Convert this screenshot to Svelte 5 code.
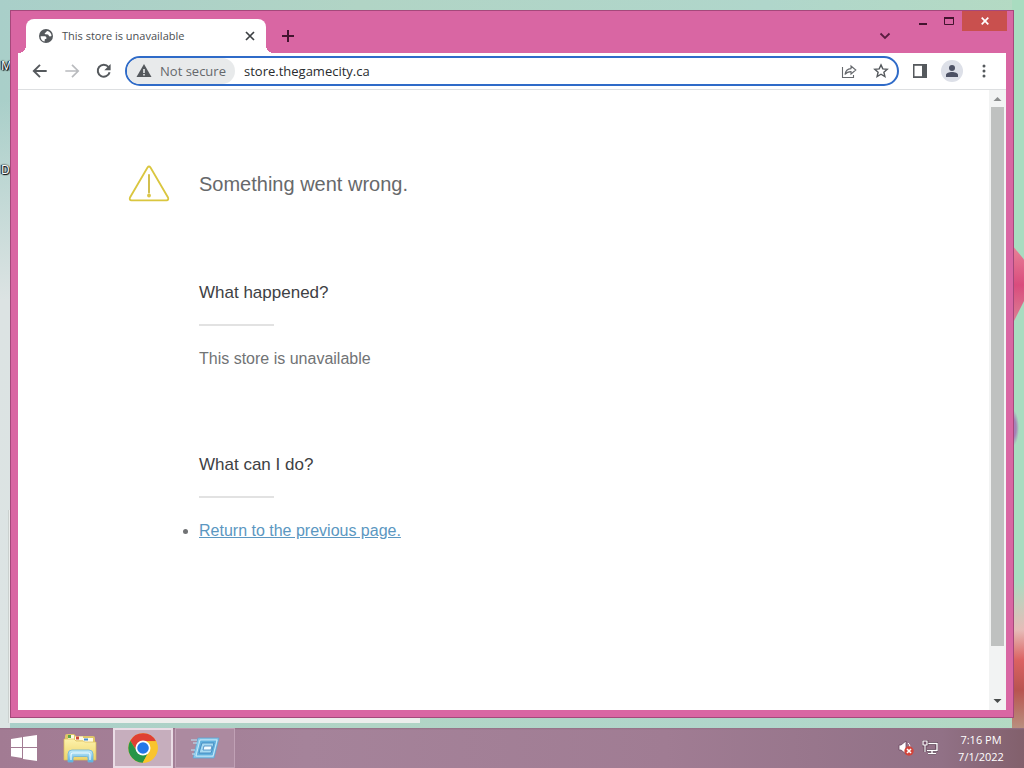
<script>
  let address = $state('store.thegamecity.ca');
  const sections = [
    { title: 'What happened?', text: 'This store is unavailable' },
    { title: 'What can I do?', link: 'Return to the previous page.' }
  ];
</script>

<div class="screen">
  <div class="desktop">
    <div class="petals" aria-hidden="true"></div>
    <div class="back-window" aria-hidden="true"></div>
    <span class="shortcut first">M</span>
    <span class="shortcut second">D</span>

    <div class="window">
      <header class="titlebar">
        <div class="tabs">
          <div class="tab">
            <svg class="globe" viewBox="0 0 16 16" width="16" height="16" aria-hidden="true">
              <circle cx="8" cy="8" r="7" fill="#55595d" />
              <path d="M2.6 8.2 6.9 8.3c1.3.2 1.7 1.3 1.5 2.4l-1.6.5-.2 2.3C4 13 2.4 10.800 2.600 8.200Z" fill="#fff" />
              <path d="M9.700 2.900c-1.700.1-1.300 1.700-2.700 2-.6.2-.2 1.300.7 1.400l2.300.2c.7.8 1 1.700 2 1.900l1.500-.3c.1-2.500-1.500-4.600-3.800-5.200Z" fill="#fff" />
            </svg>
            <span class="tab-title">This store is unavailable</span>
            <button class="tab-close" aria-label="Close tab">
              <svg viewBox="0 0 10 10" width="10" height="10"><path d="m1 1 8 8M9 1 1 9" fill="none" stroke="#3c4043" stroke-width="1.700" /></svg>
            </button>
          </div>
          <button class="new-tab" aria-label="New tab">
            <svg viewBox="0 0 12 12" width="12" height="12"><path d="M6 0v12M0 6h12" stroke="#43142f" stroke-width="2" /></svg>
          </button>
        </div>
        <button class="tab-search" aria-label="Search tabs">
          <svg viewBox="0 0 12 8" width="12" height="8"><path d="m1.500 1.500 4.500 4.500 4.500-4.500" fill="none" stroke="#5b1c40" stroke-width="1.800" /></svg>
        </button>
        <div class="controls">
          <button aria-label="Minimize"><svg viewBox="0 0 10 12" width="10" height="12"><path d="M1 8h8v2H1z" fill="#43142f" /></svg></button>
          <button aria-label="Maximize"><svg viewBox="0 0 10 8" width="10" height="8"><path d="M.5 1v6.500h9V1" fill="none" stroke="#43142f" /><path d="M0 0h10v2H0z" fill="#43142f" /></svg></button>
          <button class="close" aria-label="Close"><svg viewBox="0 0 8 8" width="8" height="8"><path d="m.7.7 6.600 6.600M7.300.7.7 7.300" stroke="#fff" stroke-width="1.700" /></svg></button>
        </div>
      </header>

      <nav class="toolbar" aria-label="Browser">
        <button aria-label="Back"><svg viewBox="0 0 16 16" width="16" height="16"><path d="M14.700 8H2M8 1.800 1.800 8 8 14.200" fill="none" stroke="#55595d" stroke-width="1.900" /></svg></button>
        <button aria-label="Forward"><svg viewBox="0 0 16 16" width="16" height="16"><path d="M1.300 8H14M8 1.800 14.200 8 8 14.200" fill="none" stroke="#b9bbbe" stroke-width="1.700" /></svg></button>
        <button aria-label="Reload"><svg viewBox="0 0 16 16" width="16" height="16"><path d="M13.600 9.200A6 6 0 1 1 12.500 4" fill="none" stroke="#55595d" stroke-width="2" /><path d="M14.600 1v6.300H8.300z" fill="#55595d" /></svg></button>
        <div class="omnibox">
          <button class="security">
            <svg viewBox="0 0 16 14" width="16" height="14" aria-hidden="true"><path d="M8 0 15.500 13H.5z" fill="#55595d" /><path d="M7.200 5h1.600v4H7.200zm0 5h1.600v1.600H7.200z" fill="#e8eaeb" /></svg>
            Not secure
          </button>
          <input aria-label="Address" bind:value={address} spellcheck="false" />
          <button aria-label="Share"><svg viewBox="0 0 16 16" width="16" height="16"><path d="M1.500 4v10.500h11V12M4 11.500c.5-4 2.500-5.700 6-5.900V3l4.800 4-4.800 4V8.600c-2.700 0-4.500.8-6 2.900Z" fill="none" stroke="#66696d" stroke-width="1.100" /></svg></button>
          <button aria-label="Bookmark this tab"><svg viewBox="0 0 16 16" width="16" height="16"><path d="m8 1.900 1.800 4 4.400.4-3.300 2.900 1 4.300L8 11.200l-3.900 2.300 1-4.300-3.300-2.900 4.400-.4z" fill="none" stroke="#55595d" stroke-width="1.400" /></svg></button>
        </div>
        <div class="actions">
          <button aria-label="Side panel"><svg viewBox="0 0 14 14" width="14" height="14"><path d="M0 0h14v14H0z" fill="#55595d" /><path d="M1.500 1.800H9v10.400H1.500z" fill="#fff" /></svg></button>
          <button aria-label="Profile"><svg viewBox="0 0 22 22" width="22" height="22"><circle cx="11" cy="11" r="11" fill="#dde0e8" /><circle cx="11" cy="8" r="3" fill="#4d5265" /><path d="M5 17v-2c0-2 3-3 6-3s6 1 6 3v2z" fill="#4d5265" /></svg></button>
          <button aria-label="Menu"><svg viewBox="0 0 4 14" width="4" height="14"><g fill="#55595d"><circle cx="2" cy="2" r="1.500" /><circle cx="2" cy="7" r="1.500" /><circle cx="2" cy="12" r="1.500" /></g></svg></button>
        </div>
      </nav>

      <div class="viewport">
        <main>
          <svg class="warning" viewBox="0 0 42 38" width="42" height="38" aria-hidden="true">
            <path d="M19.500 2.500q1.500-2 3 0L40 32.500q1 2.500-1.500 2.800h-35Q1 35 2 32.500Z" fill="none" stroke="#dac63f" stroke-width="1.800" />
            <path d="M21 10v17.500" stroke="#cdb83c" stroke-width="1.800" stroke-linecap="round" />
            <circle cx="21" cy="30.500" r="1.900" fill="#dcc648" />
          </svg>
          <div class="message">
            <h1>Something went wrong.</h1>
            {#each sections as section}
              <section>
                <h2>{section.title}</h2>
                {#if section.text}<p>{section.text}</p>{/if}
                {#if section.link}
                  <ul><li><a href="#previous">{section.link}</a></li></ul>
                {/if}
              </section>
            {/each}
          </div>
        </main>
        <div class="scrollbar" aria-hidden="true">
          <svg viewBox="0 0 17 17" width="17" height="17"><path d="m8.500 7 4 4h-8z" fill="#8b8d8d" /></svg>
          <div class="track"><div class="thumb"></div></div>
          <svg viewBox="0 0 17 17" width="17" height="17"><path d="M4.500 6h8l-4 4z" fill="#484b4b" /></svg>
        </div>
      </div>
    </div>
  </div>

  <footer class="taskbar">
    <button class="start" aria-label="Start">
      <svg viewBox="0 0 28 26" width="28" height="26"><path d="m1 4 11-1.700V12H1zM13 2.100 27 0v12H13zM1 13h11v9.900L1 21.300zM13 13h14v13l-14-2.100z" fill="#fff" /></svg>
    </button>
    <button class="app" aria-label="File Explorer">
      <svg viewBox="0 0 34 30" width="34" height="30">
        <defs>
          <linearGradient id="folder" x2="0" y2="1"><stop offset="0" stop-color="#fdf2ab" /><stop offset="1" stop-color="#ecd36b" /></linearGradient>
          <linearGradient id="stand" x2="0" y2="1"><stop offset="0" stop-color="#c9eef9" /><stop offset="1" stop-color="#57afe0" /></linearGradient>
        </defs>
        <path d="M2 3q0-2 2-2h7l2 2h17q2 0 2 2v22H2z" fill="#dfc669" />
        <path d="M5 2h6v4H5z" fill="#fffbe6" /><path d="M5 2h3v3H5z" fill="#5ca648" />
        <path d="M12 3.500h8v4h-8z" fill="#fffbe6" /><path d="M13 3.500h3v3h-3z" fill="#d04a3b" />
        <path d="M20 5h10v4H20z" fill="#fffbe6" /><path d="M21 5.500h4v2h-4z" fill="#3f8cd0" />
        <path d="M1 6h10l2 2h7l2 1h11v18H1z" fill="url(#folder)" stroke="#dcbd56" stroke-width=".7" />
        <path d="M5 29v-8q0-4 4-4h17q4 0 4 4v8h-5v-4q0-1.500-1.500-1.500h-12Q10 23.500 10 25v4z" fill="url(#stand)" stroke="#6db4d8" stroke-width=".8" />
        <path d="M8 27v-5q0-2 2-2h15q2 0 2 2v5" fill="none" stroke="#ebfaff" stroke-width="1.200" />
      </svg>
    </button>
    <button class="app open active" aria-label="Google Chrome">
      <svg viewBox="0 0 48 48" width="30" height="30">
        <circle cx="24" cy="24" r="23.500" fill="#f9c42d" />
        <path d="M24 13h20.800A23.500 23.500 0 0 0 3.650 12.250L14.500 29.500Z" fill="#df4033" />
        <path d="M3.650 12.250A23.500 23.500 0 0 0 23.600 47.500L33.500 29.500H14.500Z" fill="#279548" />
        <path d="M44.800 13H24l9.500 16.500L23.600 47.500A23.500 23.500 0 0 0 44.800 13Z" fill="#f9c42d" />
        <circle cx="24" cy="24" r="12" fill="#fff" /><circle cx="24" cy="24" r="9.300" fill="#2477e8" />
      </svg>
    </button>
    <button class="app open" aria-label="Run">
      <svg viewBox="0 0 30 26" width="30" height="26">
        <path d="M8 3h21l-5 20H3z" fill="#8ccbeb" stroke="#5fa5d3" stroke-width=".8" />
        <path d="M10 5h17l-4 16H6z" fill="#62b0dd" stroke="#def5ff" stroke-width=".8" />
        <path d="M12 8h12l-3 10H9z" fill="#a8daf2" stroke="#3b83bb" stroke-width=".8" />
        <path d="M14 11h8l-1 4h-8z" fill="#f3fcff" stroke="#3d83bd" stroke-width=".8" />
        <path d="M1 5h6M3 8h4M5 15H1M5 19H2" stroke="#bce7fa" />
      </svg>
    </button>
    <div class="tray">
      <button aria-label="Volume muted">
        <svg viewBox="0 0 16 16" width="16" height="16">
          <path d="M1 5h2l5-4v13l-5-4H1z" fill="#fff" stroke="#694760" stroke-width=".8" />
          <path d="M10 3q2 1.500 2 4" fill="none" stroke="#fff" />
          <circle cx="11" cy="11" r="4.700" fill="#d2443b" /><path d="m9 9 4 4m0-4-4 4" stroke="#fff" stroke-width="1.600" />
        </svg>
      </button>
      <button aria-label="Network">
        <svg viewBox="0 0 16 16" width="16" height="16">
          <path d="M6 3.500h9v7H5M10 11v2.500m-4 0h8" fill="none" stroke="#503448" stroke-width="3" />
          <path d="M6 3.500h9v7H5M10 11v2.500m-4 0h8" fill="none" stroke="#fff" stroke-width="1.400" />
          <path d="M1 1h4v4H1zM3 5v7" fill="#76516c" stroke="#503448" stroke-width="2.600" /><path d="M1 1h4v4H1zM3 5v7" fill="#76516c" stroke="#fff" stroke-width="1.200" />
        </svg>
      </button>
      <time datetime="2022-07-01T19:16"><span>7:16 PM</span><span>7/1/2022</span></time>
    </div>
  </footer>
</div>

<style>
  :global(body) { margin: 0; }
  * { box-sizing: border-box; }
  button { display: flex; align-items: center; justify-content: center; padding: 0; border: 0; background: none; font: inherit; color: inherit; }
  svg { display: block; flex: none; }

  .screen { display: flex; flex-direction: column; min-height: 100vh; overflow: hidden; font-family: "Open Sans", "Noto Sans", sans-serif; }
  .desktop {
    position: relative; flex: 1; display: flex; padding: 10px;
    background: linear-gradient(180deg, transparent 0, transparent 100px, #dce3e3 300px, #dce4e3 100%) left / 10px 100% no-repeat,
      linear-gradient(90deg, #a9cfc9, #b1d4c5 35%, #b0d6cb 75%, #b4dac3);
  }
  .petals {
    position: absolute; top: 0; right: 0; bottom: 0; width: 12px;
    background:
      radial-gradient(ellipse 6px 18px at 1px 428px, #a781b8 50%, transparent),
      linear-gradient(180deg, transparent 580px, #e6bcb8 630px, #db6262 660px, #b85450 690px, #b98f7e 100%),
      #a9dcc0;
  }
  .petals::before { content: ""; position: absolute; top: 245px; left: 0; width: 12px; height: 80px; background: linear-gradient(#e98399, #d94c7d 50%, #dc8497); clip-path: polygon(0 0, 100% 18%, 100% 70%, 0 100%); }
  .back-window { position: absolute; left: 8px; bottom: 5px; width: 412px; height: 213px; background: #eceeec; border-left: 1px solid #cbd1cf; }
  .shortcut { position: absolute; left: 1px; font-size: 12px; line-height: 16px; color: #fff; text-shadow: 0 0 2px #000, 1px 1px 1px #000, -1px 0 1px #000; }
  .first { top: 58px; }
  .second { top: 162px; }

  .window { position: relative; flex: 1; display: flex; flex-direction: column; min-width: 0; padding: 0 7px 7px; border: 1px solid #a5487b; background: #d966a3; }
  .titlebar { display: flex; height: 42px; }
  .tabs { flex: 1; display: flex; align-items: flex-end; padding-left: 8px; min-width: 0; }
  .tab { position: relative; display: flex; align-items: center; width: 240px; height: 34px; padding: 0 10px 0 12px; border-radius: 8px 8px 0 0; background: #fff; }
  .tab::before, .tab::after { content: ""; position: absolute; bottom: 0; width: 8px; height: 8px; }
  .tab::before { left: -8px; background: radial-gradient(circle at 0 0, transparent 8px, #fff 8px); }
  .tab::after { right: -8px; background: radial-gradient(circle at 100% 0, transparent 8px, #fff 8px); }
  .tab-title { flex: 1; padding-left: 8px; font-size: 11px; line-height: 16px; color: #4b4e51; white-space: nowrap; }
  .tab-close { width: 12px; height: 16px; }
  .new-tab { width: 28px; height: 34px; margin-left: 8px; }
  .tab-search { width: 28px; height: 28px; margin: 11px 11px 0 0; }
  .controls { display: flex; margin-right: -1px; }
  .controls button { width: 26px; height: 20px; }
  .controls .close { width: 45px; background: #c9504e; }

  .toolbar { display: flex; align-items: center; height: 37px; padding: 0 6px; border-bottom: 1px solid #dddfe1; background: #fff; }
  .toolbar > button { width: 32px; height: 32px; }
  .omnibox { flex: 1; display: flex; align-items: center; min-width: 0; height: 30px; margin-left: 5px; border: 2px solid #2f6bc8; border-radius: 15px; background: #fff; }
  .omnibox > button { width: 32px; height: 26px; }
  .omnibox .security { gap: 8px; width: 108px; border-radius: 13px; background: #e8eaeb; font-size: 13px; line-height: 18px; color: #65686b; white-space: nowrap; }
  .omnibox input { flex: 1; min-width: 0; height: 24px; padding: 0 9px; border: 0; outline: 0; background: transparent; font: 13px/18px "Open Sans", "Noto Sans", sans-serif; color: #2a2c2e; }
  .actions { display: flex; align-items: center; margin-left: 5px; }
  .actions button { width: 32px; height: 32px; }

  .viewport { flex: 1; display: flex; background: #fff; }
  main { flex: 1; display: flex; align-items: flex-start; gap: 29px; min-width: 0; padding: 75px 24px 60px 110px; font-family: "Liberation Sans", Arial, sans-serif; color: #717375; }
  .message { flex: 1; min-width: 0; }
  h1 { margin: 6px 0 85px; font-size: 20px; line-height: 26px; font-weight: 400; color: #67696b; }
  section { margin-bottom: 84px; }
  h2 { margin: 0; font-size: 17px; line-height: 22px; font-weight: 400; color: #3e4144; }
  h2::after { content: ""; display: block; width: 75px; height: 2px; margin-top: 20px; background: #e2e2e2; }
  p, ul { margin: 22px 0 0; padding: 0; font-size: 16px; line-height: 22px; }
  a { color: #5b97c1; text-decoration: underline; }

  .scrollbar { display: flex; flex-direction: column; width: 17px; background: #f2f3f3; }
  .track { flex: 1; padding: 0 2px; }
  .thumb { height: 92%; background: #bfc1c0; }

  .taskbar { display: flex; height: 40px; background: linear-gradient(#947085 0, transparent 2px), linear-gradient(90deg, #a27b93, #a5839a 30%, #a07c93 65%, #917186 92%, #82606c); }
  .start { width: 48px; }
  .app { width: 60px; margin-right: 2px; }
  .app:not(.open) { width: 64px; margin-right: 1px; }
  .open { width: 60px; border: 1px solid #c0a1b5; background: #ac8aa0; }
  .active { border: 2px solid #eadde6; background: #c6aebd; }
  .tray { display: flex; align-items: center; gap: 8px; margin-left: auto; padding-right: 16px; }
  time { display: flex; flex-direction: column; align-items: center; width: 54px; margin-left: 8px; font-size: 11px; line-height: 17px; color: #fff; white-space: nowrap; }
</style>
